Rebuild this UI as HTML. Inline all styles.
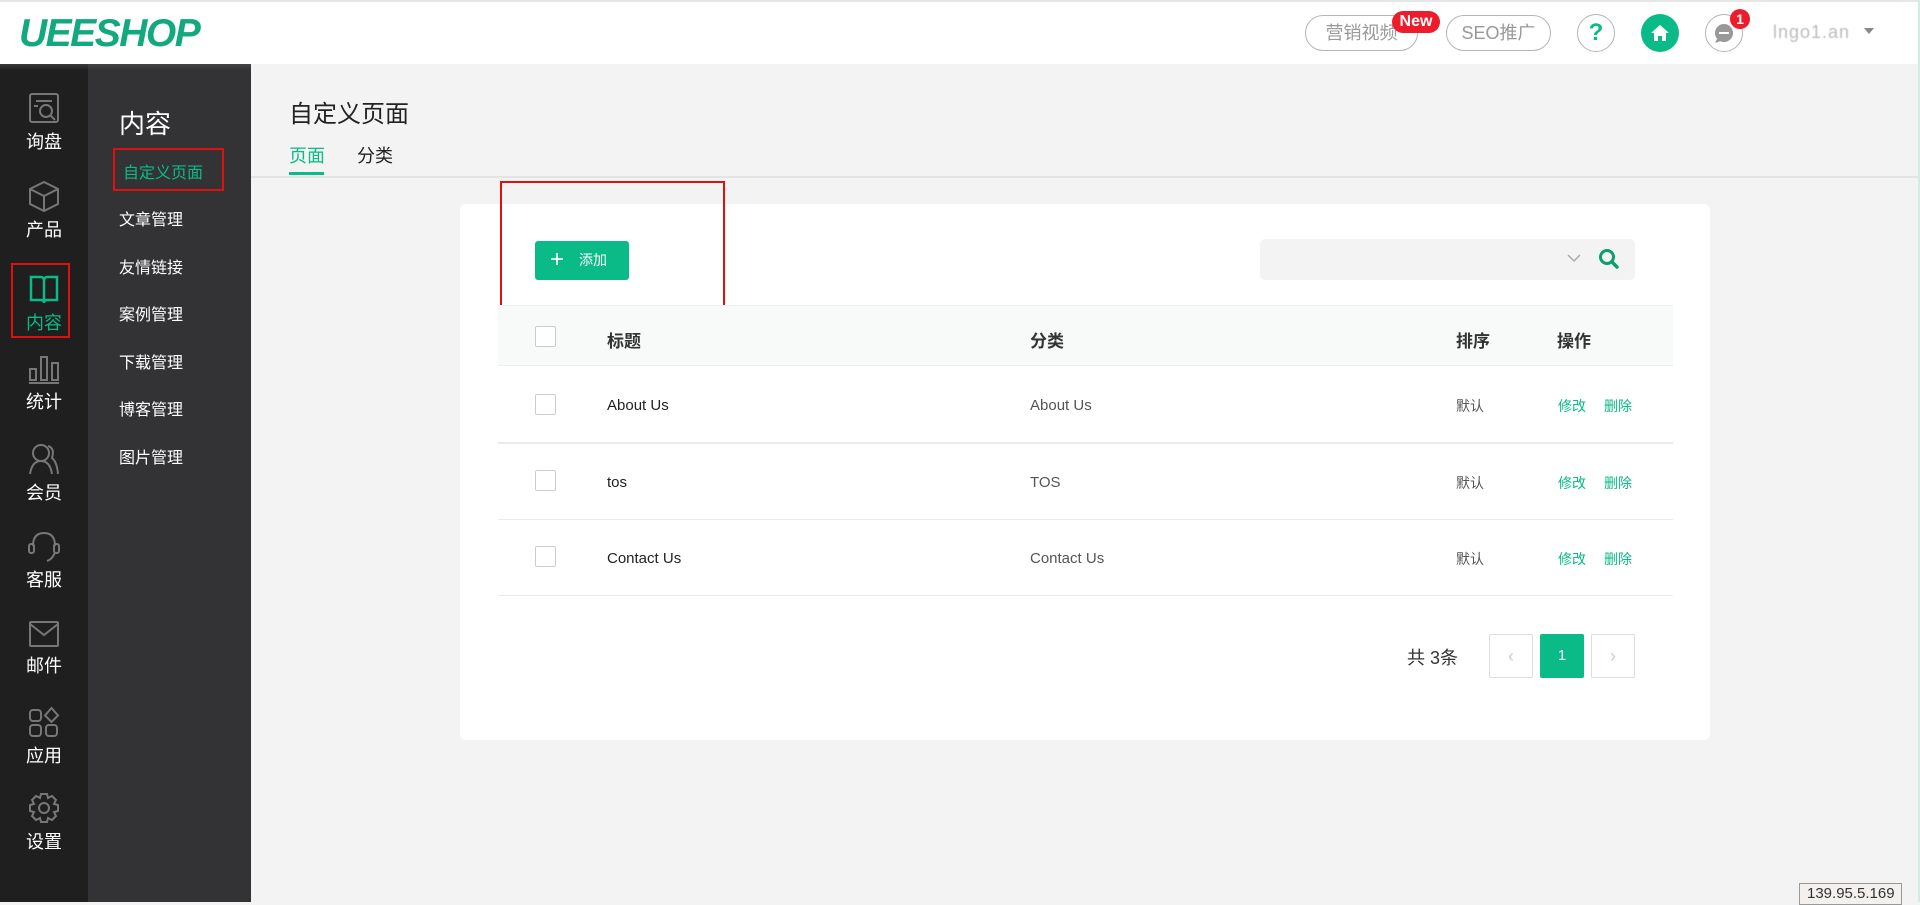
<!DOCTYPE html>
<html><head><meta charset="utf-8"><style>
*{margin:0;padding:0;box-sizing:border-box}
body{width:1920px;height:902px;overflow:hidden;background:#f3f3f3;font-family:"Liberation Sans","Noto Sans CJK SC",sans-serif;position:relative}
.a{position:absolute}
.hdr{left:0;top:0;width:1920px;height:64px;background:#fff;border-top:2px solid #e6e6e6}
.logo{left:19px;top:12px;font-size:39px;font-weight:bold;font-style:italic;color:#13a97f;letter-spacing:-1.5px}
.pill{top:15px;height:36px;border:1px solid #b5b5b5;border-radius:18px;color:#999;font-size:18px;line-height:34px;text-align:center}
.circ{width:38px;height:38px;border-radius:50%;top:14px}
.nav{left:0;top:64px;width:88px;height:838px;background:#1f1f1f}
.sub{left:88px;top:64px;width:163px;height:838px;background:#333335}
.ni{left:0;width:88px;text-align:center;color:#fff;font-size:18px}
.ni svg{display:block;margin:0 auto 4px}
.si{left:119px;color:#fff;font-size:16px}
.card{left:460px;top:204px;width:1250px;height:536px;background:#fff;border-radius:6px}
.cb{width:21px;height:21px;border:1px solid #ccc;border-radius:2px;background:#fff}
.td{font-size:15px;color:#222}
.g{color:#0abb87}
.row{left:498px;width:1175px;height:1px;background:#e8ecef}
</style></head><body>
<div class="a hdr"></div>
<div class="a logo">UEESHOP</div>
<div class="a pill" style="left:1305px;width:113px">营销视频</div>
<div class="a" style="left:1392px;top:11px;width:48px;height:22px;background:#ee1c2a;border-radius:11px;color:#fff;font-size:16px;font-weight:bold;text-align:center;line-height:22px">New</div>
<div class="a pill" style="left:1446px;width:105px">SEO推广</div>
<div class="a circ" style="left:1577px;border:1px solid #b5b5b5;color:#0abb87;font-weight:bold;font-size:24px;text-align:center;line-height:36px">?</div>
<div class="a circ" style="left:1641px;background:#0abb87"><svg width="38" height="38" viewBox="0 0 38 38"><path d="M10 19 L19 11 L28 19 H25 V27 H21 V22 H17 V27 H13 V19 Z" fill="#fff"/></svg></div>
<div class="a circ" style="left:1705px;border:1px solid #b5b5b5"><svg width="36" height="36" viewBox="0 0 36 36"><circle cx="18" cy="18" r="9" fill="#999"/><path d="M11 24 L9 28 L15 26Z" fill="#999"/><rect x="13" y="17" width="10" height="2" fill="#fff"/></svg></div>
<div class="a" style="left:1730px;top:9px;width:20px;height:20px;border-radius:50%;background:#ee1c2a;color:#fff;font-size:14px;font-weight:bold;text-align:center;line-height:20px">1</div>
<div class="a" style="left:1773px;top:22px;color:#bbb;font-size:18px;letter-spacing:1px;filter:blur(0.6px)">lngo1.an</div>
<div class="a" style="left:1864px;top:28px;border:5px solid transparent;border-top:6px solid #888"></div>

<div class="a nav"></div>
<div class="a sub"></div>
<div class="a" style="left:0;top:64px;width:251px;height:6px;background:linear-gradient(#555,transparent);opacity:.5"></div>
<div class="a ni" style="top:92px"><svg width="32" height="32" viewBox="0 0 32 32" fill="none" stroke="#777" stroke-width="2"><rect x="2" y="2" width="28" height="28" rx="2"/><path d="M8 9h16M6 14h4"/><circle cx="18" cy="19" r="6"/><path d="M22 23l5 5"/></svg>询盘</div>
<div class="a ni" style="top:180px"><svg width="32" height="32" viewBox="0 0 32 32" fill="none" stroke="#777" stroke-width="2"><path d="M16 2L30 9V24L16 31L2 24V9Z M2 9L16 16L30 9 M16 16V31"/></svg>产品</div>
<div class="a" style="left:11px;top:263px;width:59px;height:75px;border:2px solid #e01010"></div>
<div class="a ni" style="top:273px;color:#0abb87"><svg width="32" height="32" viewBox="0 0 32 32" fill="none" stroke="#0abb87" stroke-width="2.5"><path d="M3 4V27H13Q16 27 16 30Q16 27 19 27H29V4H19Q16 4 16 8Q16 4 13 4Z M16 8V30"/></svg>内容</div>
<div class="a ni" style="top:352px"><svg width="32" height="32" viewBox="0 0 32 32" fill="none" stroke="#777" stroke-width="2"><rect x="2" y="17" width="6" height="11"/><rect x="13" y="5" width="6" height="23"/><rect x="24" y="11" width="6" height="17"/><path d="M1 31h30"/></svg>统计</div>
<div class="a ni" style="top:443px"><svg width="32" height="32" viewBox="0 0 32 32" fill="none" stroke="#777" stroke-width="2"><circle cx="13" cy="10" r="8"/><path d="M2 31Q4 18 13 18Q22 18 24 31 M20 3Q27 5 24 15Q29 19 30 31"/></svg>会员</div>
<div class="a ni" style="top:530px"><svg width="32" height="32" viewBox="0 0 32 32" fill="none" stroke="#777" stroke-width="2"><path d="M5 16Q5 3 16 3Q27 3 27 16 M27 22Q25 29 19 31"/><rect x="1" y="14" width="5" height="9" rx="2"/><rect x="26" y="14" width="5" height="9" rx="2"/></svg>客服</div>
<div class="a ni" style="top:620px"><svg width="32" height="28" viewBox="0 0 32 28" fill="none" stroke="#777" stroke-width="2"><rect x="2" y="2" width="28" height="24" rx="1"/><path d="M2 4L16 15L30 4"/></svg>邮件</div>
<div class="a ni" style="top:706px"><svg width="32" height="32" viewBox="0 0 32 32" fill="none" stroke="#777" stroke-width="2"><rect x="2" y="4" width="11" height="11" rx="3"/><rect x="2" y="19" width="11" height="11" rx="3"/><rect x="18" y="19" width="11" height="11" rx="3"/><path d="M23.5 2L30 9.5L23.5 16L17 9.5Z"/></svg>应用</div>
<div class="a ni" style="top:792px"><svg width="32" height="32" viewBox="0 0 32 32" fill="none" stroke="#777" stroke-width="2"><path d="M13 2H19L20 6L24 4L28 8L26 12L30 13V19L26 20L28 24L24 28L20 26L19 30H13L12 26L8 28L4 24L6 20L2 19V13L6 12L4 8L8 4L12 6Z"/><circle cx="16" cy="16" r="5"/></svg>设置</div>

<div class="a" style="left:119px;top:104px;color:#fff;font-size:26px">内容</div>
<div class="a" style="left:113px;top:148px;width:111px;height:43px;border:2px solid #e01010"></div>
<div class="a si" style="left:123px;top:159px;color:#0abb87">自定义页面</div>
<div class="a si" style="top:206px">文章管理</div>
<div class="a si" style="top:254px">友情链接</div>
<div class="a si" style="top:301px">案例管理</div>
<div class="a si" style="top:349px">下载管理</div>
<div class="a si" style="top:396px">博客管理</div>
<div class="a si" style="top:444px">图片管理</div>

<div class="a" style="left:289px;top:94px;font-size:24px;color:#222">自定义页面</div>
<div class="a g" style="left:289px;top:142px;font-size:18px">页面</div>
<div class="a" style="left:357px;top:142px;font-size:18px;color:#222">分类</div>
<div class="a" style="left:289px;top:172px;width:35px;height:3px;background:#0abb87"></div>
<div class="a" style="left:251px;top:176px;width:1669px;height:2px;background:#e4e4e4"></div>

<div class="a card"></div>
<div class="a" style="left:500px;top:181px;width:225px;height:147px;border:2px solid #e01010"></div>
<div class="a" style="left:535px;top:241px;width:94px;height:39px;background:#0abb87;border-radius:3px;color:#fff;font-size:14px;line-height:39px"><span style="position:absolute;left:15px;top:-1px;font-size:24px;font-weight:300">+</span><span style="position:absolute;left:44px">添加</span></div>
<div class="a" style="left:1260px;top:239px;width:375px;height:41px;background:#f3f3f3;border-radius:5px"></div>
<svg class="a" style="left:1566px;top:252px" width="16" height="12" viewBox="0 0 16 12"><path d="M2 3L8 9L14 3" fill="none" stroke="#aaa" stroke-width="1.5"/></svg>
<svg class="a" style="left:1598px;top:248px" width="22" height="22" viewBox="0 0 22 22"><circle cx="9" cy="9" r="6.5" fill="none" stroke="#0e9e6e" stroke-width="3"/><path d="M14 14L19 19" stroke="#0e9e6e" stroke-width="3.5" stroke-linecap="round"/></svg>

<div class="a" style="left:498px;top:305px;width:1175px;height:61px;background:#f8f9f9;border-top:1px solid #eceff1;border-bottom:1px solid #eceff1"></div>
<div class="a cb" style="left:535px;top:326px"></div>
<div class="a" style="left:607px;top:327px;font-size:17px;font-weight:bold;color:#333">标题</div>
<div class="a" style="left:1030px;top:327px;font-size:17px;font-weight:bold;color:#333">分类</div>
<div class="a" style="left:1456px;top:327px;font-size:17px;font-weight:bold;color:#333">排序</div>
<div class="a" style="left:1557px;top:327px;font-size:17px;font-weight:bold;color:#333">操作</div>

<div class="a cb" style="left:535px;top:394px"></div>
<div class="a td" style="left:607px;top:397px">About Us</div>
<div class="a td" style="left:1030px;top:397px;color:#555">About Us</div>
<div class="a td" style="left:1456px;top:396px;color:#555;font-size:14px">默认</div>
<div class="a g" style="left:1558px;top:396px;font-size:14px">修改</div>
<div class="a g" style="left:1604px;top:396px;font-size:14px">删除</div>
<div class="a row" style="top:442px;height:2px"></div>

<div class="a cb" style="left:535px;top:470px"></div>
<div class="a td" style="left:607px;top:474px">tos</div>
<div class="a td" style="left:1030px;top:474px;color:#555">TOS</div>
<div class="a td" style="left:1456px;top:473px;color:#555;font-size:14px">默认</div>
<div class="a g" style="left:1558px;top:473px;font-size:14px">修改</div>
<div class="a g" style="left:1604px;top:473px;font-size:14px">删除</div>
<div class="a row" style="top:519px"></div>

<div class="a cb" style="left:535px;top:546px"></div>
<div class="a td" style="left:607px;top:550px">Contact Us</div>
<div class="a td" style="left:1030px;top:550px;color:#555">Contact Us</div>
<div class="a td" style="left:1456px;top:549px;color:#555;font-size:14px">默认</div>
<div class="a g" style="left:1558px;top:549px;font-size:14px">修改</div>
<div class="a g" style="left:1604px;top:549px;font-size:14px">删除</div>
<div class="a row" style="top:595px"></div>

<div class="a" style="left:1407px;top:644px;font-size:18px;color:#333">共 3条</div>
<div class="a" style="left:1489px;top:634px;width:44px;height:44px;border:1px solid #ddd;border-radius:2px;color:#ccc;text-align:center;line-height:42px;font-size:18px">‹</div>
<div class="a" style="left:1540px;top:634px;width:44px;height:44px;background:#0abb87;border-radius:2px;color:#fff;text-align:center;line-height:44px;font-size:15px">1</div>
<div class="a" style="left:1591px;top:634px;width:44px;height:44px;border:1px solid #ddd;border-radius:2px;color:#ccc;text-align:center;line-height:42px;font-size:18px">›</div>

<div class="a" style="left:1799px;top:883px;width:103px;height:22px;border:1px solid #999;background:#f3f0ee;font-size:15px;color:#333;padding-left:7px;line-height:20px">139.95.5.169</div>
<div class="a" style="left:1918px;top:0;width:2px;height:902px;background:#cfeee2"></div>
</body></html>
